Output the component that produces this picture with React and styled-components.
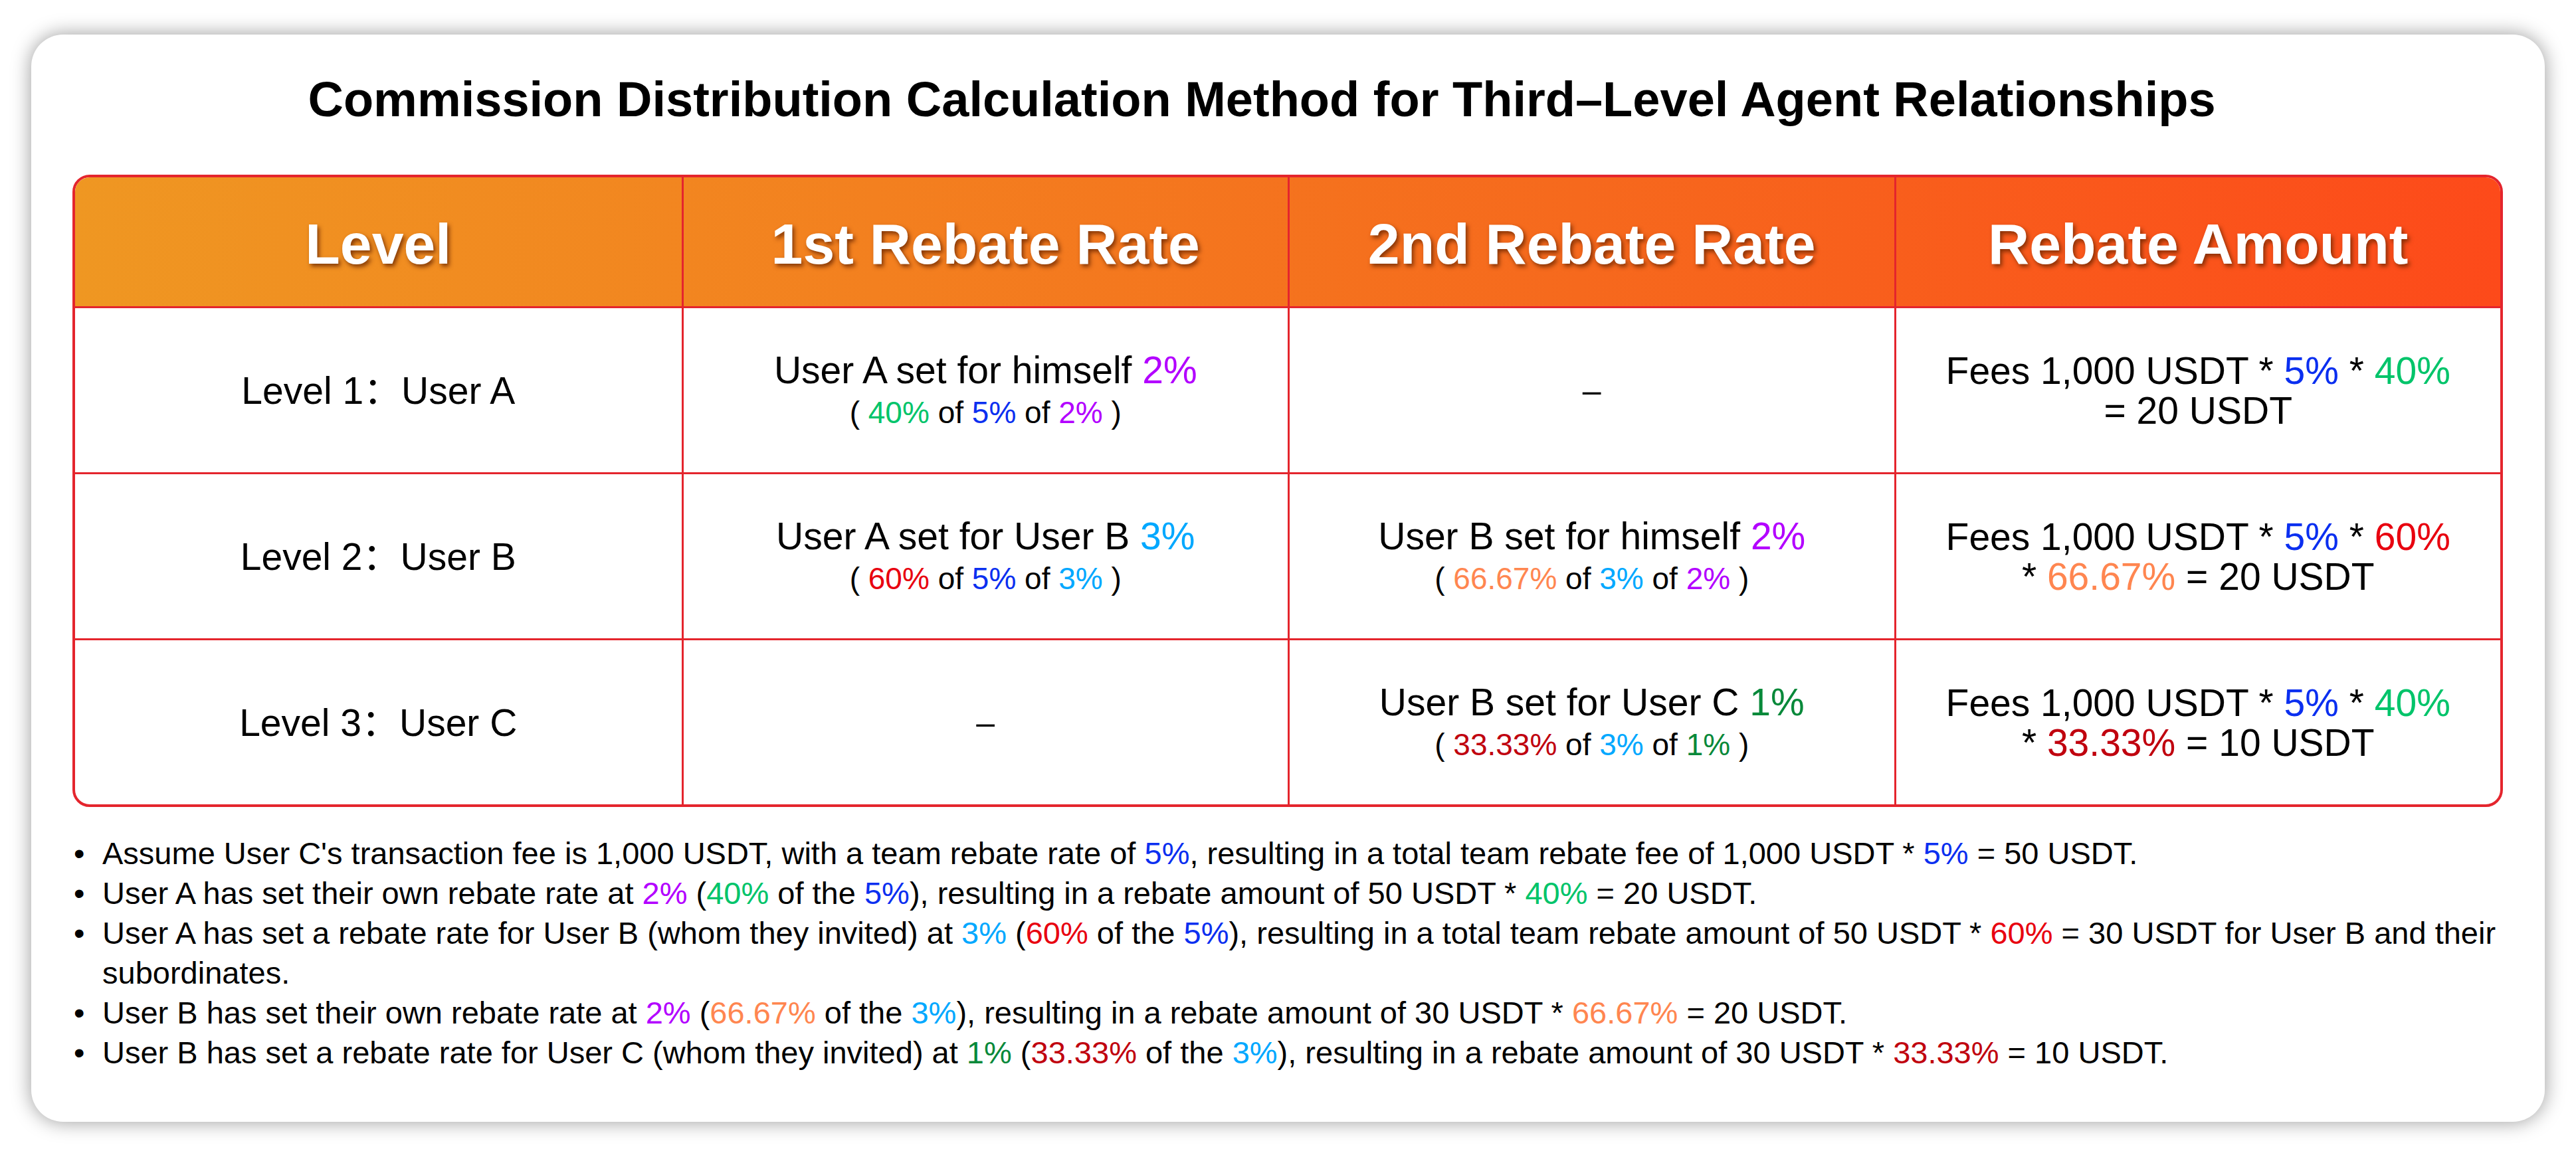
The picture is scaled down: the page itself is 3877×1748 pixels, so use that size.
import React from "react";
import styled, { createGlobalStyle } from "styled-components";

const C = {
  purple: "#b300ff",
  green: "#00c46a",
  blue: "#0b2ff0",
  sky: "#00a8ff",
  red: "#e8000f",
  orange: "#ff8650",
  maroon: "#c0000e",
  forest: "#08893a",
};

const GlobalStyle = createGlobalStyle`
  html, body { margin: 0; padding: 0; background: #ffffff; }
  body { font-family: "Liberation Sans", Arial, "Noto Sans CJK SC", sans-serif; color: #000; }
`;

const Page = styled.div`
  padding: 52px 47px 59px 47px;
  width: 3783px;
`;

const Card = styled.div`
  box-sizing: border-box;
  width: 3783px;
  height: 1637px;
  background: #ffffff;
  border-radius: 48px;
  box-shadow: 0 0 30px rgba(0, 0, 0, 0.4);
  padding: 61px 63px 0 62px;
  display: flex;
  flex-direction: column;
`;

const Title = styled.h1`
  margin: 0 0 76px 0;
  padding-right: 78px;
  text-align: center;
  font-family: "Liberation Sans", Arial, sans-serif;
  font-weight: 700;
  font-size: 74px;
  line-height: 74px;
  color: #000;
`;

const Table = styled.div`
  border: 4px solid #e4252d;
  border-radius: 26px;
  overflow: hidden;
  display: flex;
  flex-direction: column;
`;

const HeaderRow = styled.div`
  display: grid;
  grid-template-columns: repeat(4, 1fr);
  height: 194px;
  background: linear-gradient(90deg, #ef9722 0%, #f3801f 33%, #f6691d 62%, #fd4a1a 100%);
`;

const HeaderCell = styled.div`
  box-sizing: border-box;
  display: flex;
  align-items: center;
  justify-content: center;
  color: #ffffff;
  font-weight: 700;
  font-size: 86px;
  padding-top: 6px;
  text-shadow: 3px 4px 6px rgba(105, 38, 0, 0.8);
  & + & { border-left: 3px solid #e4252d; }
`;

const BodyRow = styled.div`
  box-sizing: border-box;
  display: grid;
  grid-template-columns: repeat(4, 1fr);
  height: 250px;
  border-top: 3px solid #e4252d;
`;

const Cell = styled.div`
  box-sizing: border-box;
  display: flex;
  flex-direction: column;
  align-items: center;
  justify-content: center;
  text-align: center;
  & + & { border-left: 3px solid #e4252d; }
`;

const Line = styled.div`
  font-size: 57px;
  line-height: ${(p) => (p.$tight ? "60px" : "66px")};
  white-space: nowrap;
`;

const SubLine = styled.div`
  font-size: 46px;
  line-height: 62px;
  white-space: nowrap;
`;

const Dash = styled.div`
  font-size: 50px;
  line-height: 60px;
`;

const Hl = styled.span`
  color: ${(p) => p.$c};
`;

const Notes = styled.ul`
  list-style: none;
  margin: 40px -30px 0 0;
  padding: 0;
`;

const Note = styled.li`
  display: flex;
  font-size: 47px;
  line-height: 60px;
`;

const Marker = styled.span`
  flex: 0 0 43px;
  padding-left: 2px;
`;

const NoteText = styled.span`
  flex: 1;
`;

const headers = ["Level", "1st Rebate Rate", "2nd Rebate Rate", "Rebate Amount"];

const Sub = ({ a, b, c }) => (
  <SubLine>
    ( <Hl $c={a.c}>{a.t}</Hl> of <Hl $c={b.c}>{b.t}</Hl> of <Hl $c={c.c}>{c.t}</Hl> )
  </SubLine>
);

export default function App() {
  return (
    <>
      <GlobalStyle />
      <Page>
        <Card>
          <Title>Commission Distribution Calculation Method for Third–Level Agent Relationships</Title>
          <Table>
            <HeaderRow>
              {headers.map((h) => (
                <HeaderCell key={h}>{h}</HeaderCell>
              ))}
            </HeaderRow>

            <BodyRow>
              <Cell>
                <Line $tight>Level 1：User A</Line>
              </Cell>
              <Cell>
                <Line>
                  User A set for himself <Hl $c={C.purple}>2%</Hl>
                </Line>
                <Sub a={{ t: "40%", c: C.green }} b={{ t: "5%", c: C.blue }} c={{ t: "2%", c: C.purple }} />
              </Cell>
              <Cell>
                <Dash>–</Dash>
              </Cell>
              <Cell>
                <Line $tight>
                  Fees 1,000 USDT * <Hl $c={C.blue}>5%</Hl> * <Hl $c={C.green}>40%</Hl>
                </Line>
                <Line $tight>= 20 USDT</Line>
              </Cell>
            </BodyRow>

            <BodyRow>
              <Cell>
                <Line $tight>Level 2：User B</Line>
              </Cell>
              <Cell>
                <Line>
                  User A set for User B <Hl $c={C.sky}>3%</Hl>
                </Line>
                <Sub a={{ t: "60%", c: C.red }} b={{ t: "5%", c: C.blue }} c={{ t: "3%", c: C.sky }} />
              </Cell>
              <Cell>
                <Line>
                  User B set for himself <Hl $c={C.purple}>2%</Hl>
                </Line>
                <Sub a={{ t: "66.67%", c: C.orange }} b={{ t: "3%", c: C.sky }} c={{ t: "2%", c: C.purple }} />
              </Cell>
              <Cell>
                <Line $tight>
                  Fees 1,000 USDT * <Hl $c={C.blue}>5%</Hl> * <Hl $c={C.red}>60%</Hl>
                </Line>
                <Line $tight>
                  * <Hl $c={C.orange}>66.67%</Hl> = 20 USDT
                </Line>
              </Cell>
            </BodyRow>

            <BodyRow>
              <Cell>
                <Line $tight>Level 3：User C</Line>
              </Cell>
              <Cell>
                <Dash>–</Dash>
              </Cell>
              <Cell>
                <Line>
                  User B set for User C <Hl $c={C.forest}>1%</Hl>
                </Line>
                <Sub a={{ t: "33.33%", c: C.maroon }} b={{ t: "3%", c: C.sky }} c={{ t: "1%", c: C.forest }} />
              </Cell>
              <Cell>
                <Line $tight>
                  Fees 1,000 USDT * <Hl $c={C.blue}>5%</Hl> * <Hl $c={C.green}>40%</Hl>
                </Line>
                <Line $tight>
                  * <Hl $c={C.maroon}>33.33%</Hl> = 10 USDT
                </Line>
              </Cell>
            </BodyRow>
          </Table>

          <Notes>
            <Note>
              <Marker>•</Marker>
              <NoteText>
                Assume User C's transaction fee is 1,000 USDT, with a team rebate rate of <Hl $c={C.blue}>5%</Hl>, resulting in a total team rebate fee of 1,000 USDT * <Hl $c={C.blue}>5%</Hl> = 50 USDT.
              </NoteText>
            </Note>
            <Note>
              <Marker>•</Marker>
              <NoteText>
                User A has set their own rebate rate at <Hl $c={C.purple}>2%</Hl> (<Hl $c={C.green}>40%</Hl> of the <Hl $c={C.blue}>5%</Hl>), resulting in a rebate amount of 50 USDT * <Hl $c={C.green}>40%</Hl> = 20 USDT.
              </NoteText>
            </Note>
            <Note>
              <Marker>•</Marker>
              <NoteText>
                User A has set a rebate rate for User B (whom they invited) at <Hl $c={C.sky}>3%</Hl> (<Hl $c={C.red}>60%</Hl> of the <Hl $c={C.blue}>5%</Hl>), resulting in a total team rebate amount of 50 USDT * <Hl $c={C.red}>60%</Hl> = 30 USDT for User B and their subordinates.
              </NoteText>
            </Note>
            <Note>
              <Marker>•</Marker>
              <NoteText>
                User B has set their own rebate rate at <Hl $c={C.purple}>2%</Hl> (<Hl $c={C.orange}>66.67%</Hl> of the <Hl $c={C.sky}>3%</Hl>), resulting in a rebate amount of 30 USDT * <Hl $c={C.orange}>66.67%</Hl> = 20 USDT.
              </NoteText>
            </Note>
            <Note>
              <Marker>•</Marker>
              <NoteText>
                User B has set a rebate rate for User C (whom they invited) at <Hl $c={C.forest}>1%</Hl> (<Hl $c={C.maroon}>33.33%</Hl> of the <Hl $c={C.sky}>3%</Hl>), resulting in a rebate amount of 30 USDT * <Hl $c={C.maroon}>33.33%</Hl> = 10 USDT.
              </NoteText>
            </Note>
          </Notes>
        </Card>
      </Page>
    </>
  );
}
